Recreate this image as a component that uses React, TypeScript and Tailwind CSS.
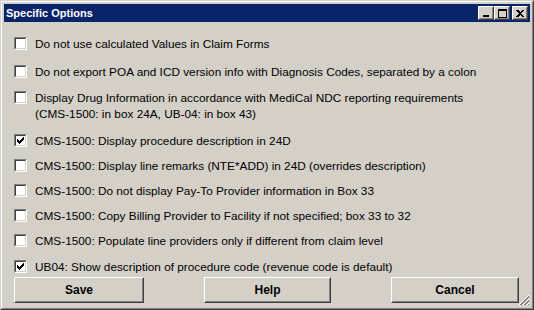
import React from 'react';

// Specific Options — classic Windows dialog with a list of checkbox options.

const options: { label: string[]; checked: boolean; mt: string }[] = [
  { label: ['Do not use calculated Values in Claim Forms'], checked: false, mt: 'mt-[15px]' },
  { label: ['Do not export POA and ICD version info with Diagnosis Codes, separated by a colon'], checked: false, mt: 'mt-[13px]' },
  {
    label: [
      'Display Drug Information in accordance with MediCal NDC reporting requirements',
      '(CMS-1500: in box 24A, UB-04: in box 43)',
    ],
    checked: false,
    mt: 'mt-[11px]',
  },
  { label: ['CMS-1500: Display procedure description in 24D'], checked: true, mt: 'mt-[12px]' },
  { label: ['CMS-1500: Display line remarks (NTE*ADD) in 24D (overrides description)'], checked: false, mt: 'mt-[10px]' },
  { label: ['CMS-1500: Do not display Pay-To Provider information in Box 33'], checked: false, mt: 'mt-[10px]' },
  { label: ['CMS-1500: Copy Billing Provider to Facility if not specified; box 33 to 32'], checked: false, mt: 'mt-[10px]' },
  { label: ['CMS-1500: Populate line providers only if different from claim level'], checked: false, mt: 'mt-[10px]' },
  { label: ['UB04: Show description of procedure code (revenue code is default)'], checked: true, mt: 'mt-[11px]' },
];

function CheckMark() {
  // 7x7 classic tick
  const px: [number, number][] = [
    [6, 0], [5, 1], [6, 1], [0, 2], [4, 2], [5, 2], [6, 2],
    [0, 3], [1, 3], [3, 3], [4, 3], [5, 3],
    [0, 4], [1, 4], [2, 4], [3, 4], [4, 4],
    [1, 5], [2, 5], [3, 5], [2, 6],
  ];
  return (
    <svg width="7" height="7" viewBox="0 0 7 7" shapeRendering="crispEdges">
      {px.map(([x, y]) => (
        <rect key={`${x}-${y}`} x={x} y={y} width="1" height="1" fill="#000" />
      ))}
    </svg>
  );
}

function Checkbox({ checked }: { checked: boolean }) {
  return (
    <div className="h-[13px] w-[13px] shrink-0 border border-t-[#808080] border-l-[#808080] border-r-white border-b-white">
      <div className="flex h-full w-full items-center justify-center border border-t-[#404040] border-l-[#404040] border-r-[#d4d0c8] border-b-[#d4d0c8] bg-white">
        {checked && <CheckMark />}
      </div>
    </div>
  );
}

function TitleButton({ children }: { children: React.ReactNode }) {
  return (
    <div className="h-[14px] w-[16px] border border-t-white border-l-white border-r-[#404040] border-b-[#404040] bg-[#d4d0c8]">
      <div className="flex h-full w-full items-center justify-center border border-t-[#d4d0c8] border-l-[#d4d0c8] border-r-[#808080] border-b-[#808080]">
        {children}
      </div>
    </div>
  );
}

function Button({ label, w }: { label: string; w: string }) {
  return (
    <div className={`h-[26px] ${w} border border-t-white border-l-white border-r-[#404040] border-b-[#404040]`}>
      <div className="flex h-full w-full items-center justify-center border border-t-[#d4d0c8] border-l-[#d4d0c8] border-r-[#808080] border-b-[#808080] text-[12px] font-bold text-black">
        {label}
      </div>
    </div>
  );
}

export default function App() {
  return (
    <div
      className="h-[310px] w-[534px] border border-t-[#d4d0c8] border-l-[#d4d0c8] border-r-[#404040] border-b-[#404040] bg-[#d4d0c8]"
      style={{ fontFamily: '"Liberation Sans", Arial, sans-serif' }}
    >
      <div className="flex h-full w-full flex-col border border-t-white border-l-white border-r-[#808080] border-b-[#808080] p-[2px]">
        {/* title bar */}
        <div className="flex h-[18px] shrink-0 items-center bg-[#0a246a] pl-[2px] pr-[2px]">
          <span className="text-[11px] font-bold leading-none text-white">Specific Options</span>
          <div className="ml-auto flex items-center">
            <TitleButton>
              <div className="mt-[5px] h-[2px] w-[6px] bg-black" />
            </TitleButton>
            <TitleButton>
              <div className="h-[9px] w-[9px] border border-t-2 border-black" />
            </TitleButton>
            <div className="ml-[2px]">
              <TitleButton>
                <svg width="8" height="7" viewBox="0 0 8 7" shapeRendering="crispEdges">
                  <path d="M0 0h2l2 2l2-2h2v0L5 3.5L8 7H6L4 5L2 7H0L3 3.5Z" fill="#000" />
                </svg>
              </TitleButton>
            </div>
          </div>
        </div>

        {/* options */}
        <div className="relative flex flex-1 flex-col pl-[10px]">
          {options.map((o, i) => (
            <div key={i} className={`flex items-start gap-[8px] ${o.mt}`}>
              <Checkbox checked={o.checked} />
              <div className="-mt-[1px] text-[11.8px] leading-[16px] text-black">
                {o.label.map((l) => (
                  <div key={l}>{l}</div>
                ))}
              </div>
            </div>
          ))}

          <div className="mt-[2px] flex items-center">
            <Button label="Save" w="w-[130px]" />
            <div className="ml-[60px]">
              <Button label="Help" w="w-[127px]" />
            </div>
            <div className="ml-[60px]">
              <Button label="Cancel" w="w-[128px]" />
            </div>
          </div>

          {/* resize grip */}
          <svg className="absolute bottom-0 right-0" width="12" height="12" viewBox="0 0 12 12" shapeRendering="crispEdges">
            {[0, 4, 8].map((o) => (
              <g key={o}>
                <line x1={11} y1={o + 1} x2={o + 1} y2={11} stroke="#ffffff" strokeWidth="1" />
                <line x1={11} y1={o + 2} x2={o + 2} y2={11} stroke="#808080" strokeWidth="1" />
                <line x1={11} y1={o + 3} x2={o + 3} y2={11} stroke="#808080" strokeWidth="1" />
              </g>
            ))}
          </svg>
        </div>
      </div>
    </div>
  );
}
